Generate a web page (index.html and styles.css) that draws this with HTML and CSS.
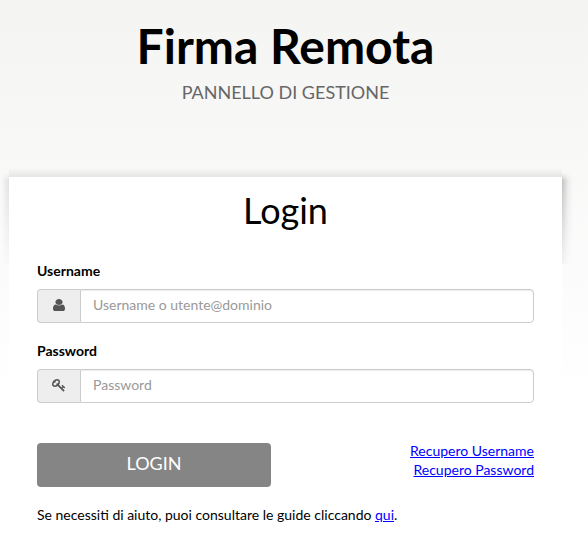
FILE: index.html
```
<!DOCTYPE html>
<html lang="it">
<head>
  <meta charset="UTF-8">
  <meta name="viewport" content="width=device-width, initial-scale=1.0">
  <title>Firma Remota</title>
  <link rel="stylesheet" href="styles.css">
</head>
<body>
  <header>
    <h1>Firma Remota</h1>
    <p class="subtitle">PANNELLO DI GESTIONE</p>
  </header>
  <main class="login-box">
    <h2>Login</h2>
    <form>
      <label for="username">Username</label>
      <div class="input-group">
        <span class="addon">
          <svg class="icon-user" viewBox="0 128 1280 1536" preserveAspectRatio="none"><path d="M1280 1399q0 109-62.500 187t-150.500 78h-854q-88 0-150.500-78t-62.500-187q0-85 8.500-160.500t31.500-152 58.500-131 94-89 134.500-34.500q131 128 313 128t313-128q76 0 134.500 34.500t94 89 58.500 131 31.500 152 8.500 160.500zm-256-887q0 159-112.500 271.500t-271.500 112.500-271.500-112.500-112.500-271.500 112.500-271.500 271.500-112.500 271.500 112.500 112.500 271.500z"/></svg>
        </span>
        <input type="text" id="username" placeholder="Username o utente@dominio">
      </div>
      <label for="password">Password</label>
      <div class="input-group">
        <span class="addon">
          <svg class="icon-key" viewBox="0 0 1792 1792"><path d="M832 512q0-80-56-136t-136-56-136 56-56 136q0 42 19 83-41-19-83-19-80 0-136 56t-56 136 56 136 136 56 136-56 56-136q0-42-19-83 41 19 83 19 80 0 136-56t56-136zm851 704q0 17-49 66t-66 49q-9 0-28.500-16t-36.500-33-38.500-40-24.500-26l-96 96 220 220q28 28 28 68 0 42-39 81t-81 39q-40 0-68-28l-671-671q-176 131-365 131-163 0-265.500-102.500t-102.500-265.500q0-160 95-313t248-248 313-95q163 0 265.500 102.500t102.500 265.500q0 189-131 365l355 355 96-96q-3-3-26-24.500t-40-38.500-33-36.500-16-28.500q0-17 49-66t66-49q13 0 23 10 6 6 46 44.500t82 79.500 86.500 86 73 78 28.500 41z"/></svg>
        </span>
        <input type="password" id="password" placeholder="Password">
      </div>
      <div class="actions">
        <button type="submit">LOGIN</button>
        <div class="recovery">
          <a href="#">Recupero Username</a>
          <a href="#">Recupero Password</a>
        </div>
      </div>
    </form>
    <p class="help">Se necessiti di aiuto, puoi consultare le guide cliccando <a href="#">qui</a>.</p>
  </main>
</body>
</html>
```

FILE: styles.css
```
* {
  margin: 0;
  padding: 0;
  box-sizing: border-box;
}
body {
  height: 543px;
  padding: 0 26px 0 9px;
  overflow: hidden;
  font-family: Lato, sans-serif;
  font-size: 14px;
  line-height: 20px;
  color: #000;
  background: linear-gradient(#f4f4f3, #fff 400px) no-repeat #fff;
}
header {
  height: 177px;
  padding-top: 19px;
  text-align: center;
}
h1 {
  font-size: 48px;
  line-height: 54px;
  font-weight: bold;
}
.subtitle {
  margin-top: 9px;
  font-size: 18px;
  color: #666;
}
.login-box {
  position: relative;
  height: 366px;
  padding: 13px 28px 0;
  background-color: #fff;
}
/* ombre sopra e ai lati del riquadro */
.login-box::before {
  content: "";
  position: absolute;
  top: -9px;
  left: 0;
  right: 0;
  height: 9px;
  background: linear-gradient(rgba(0, 0, 0, 0), rgba(0, 0, 0, 0.08));
}
.login-box::after {
  content: "";
  position: absolute;
  top: -4px;
  left: -8px;
  right: -11px;
  height: 91px;
  background:
    linear-gradient(to left, rgba(0, 0, 0, 0.09), rgba(0, 0, 0, 0)) left / 8px 100% no-repeat,
    linear-gradient(to right, rgba(0, 0, 0, 0.22), rgba(0, 0, 0, 0.05) 55%, rgba(0, 0, 0, 0)) right / 11px 100% no-repeat;
  -webkit-mask-image: linear-gradient(transparent, #000 8px, rgba(0, 0, 0, 0.15));
  mask-image: linear-gradient(transparent, #000 8px, rgba(0, 0, 0, 0.15));
}
h2 {
  margin-bottom: 31px;
  font-size: 36px;
  line-height: 40px;
  font-weight: normal;
  text-align: center;
}
label {
  display: block;
  margin-bottom: 8px;
  font-weight: bold;
}
.input-group {
  display: flex;
  height: 34px;
  margin-bottom: 18px;
}
.addon {
  display: flex;
  justify-content: center;
  align-items: center;
  width: 43px;
  padding-bottom: 2px;
  border: 1px solid #ccc;
  border-right: 0;
  border-radius: 4px 0 0 4px;
  background-color: #eee;
}
.addon svg {
  fill: #555;
}
.icon-user {
  width: 12px;
  height: 12px;
}
.icon-key {
  width: 14px;
  height: 14px;
}
input {
  flex: 1;
  padding: 5px 12px 7px;
  font: inherit;
  border: 1px solid #ccc;
  border-radius: 0 4px 4px 0;
  box-shadow: inset 0 1px 1px rgba(0, 0, 0, 0.075);
}
input::placeholder {
  color: #999;
}
.actions {
  display: flex;
  justify-content: space-between;
  margin-top: 40px;
}
button {
  width: 234px;
  height: 44px;
  padding-bottom: 4px;
  font-family: inherit;
  font-size: 18px;
  color: #fff;
  background-color: #858585;
  border: 0;
  border-radius: 4px;
}
.recovery {
  margin-top: -2px;
  text-align: right;
  line-height: 19px;
}
.recovery a {
  display: block;
}
a {
  color: #00f;
}
.help {
  margin-top: 18px;
}
```
